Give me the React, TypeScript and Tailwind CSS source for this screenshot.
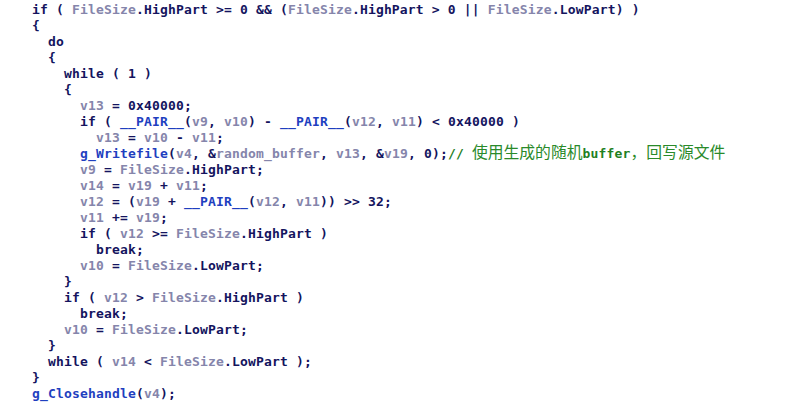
type Tok = [string, string];

// token colours
const N = "text-[#14145e]"; // keywords, punctuation, numbers
const V = "text-[#8585ab]"; // locals / globals
const F = "text-[#1f3fbf]"; // functions
const C = "text-[#1f801f]"; // comment

const lines: [number, Tok[]][] = [
  [0, [[N, "if ( "], [V, "FileSize"], [N, ".HighPart >= 0 && ("], [V, "FileSize"], [N, ".HighPart > 0 || "], [V, "FileSize"], [N, ".LowPart) )"]]],
  [0, [[N, "{"]]],
  [1, [[N, "do"]]],
  [1, [[N, "{"]]],
  [2, [[N, "while ( 1 )"]]],
  [2, [[N, "{"]]],
  [3, [[V, "v13"], [N, " = 0x40000;"]]],
  [3, [[N, "if ( "], [F, "__PAIR__"], [N, "("], [V, "v9"], [N, ", "], [V, "v10"], [N, ") - "], [F, "__PAIR__"], [N, "("], [V, "v12"], [N, ", "], [V, "v11"], [N, ") < 0x40000 )"]]],
  [4, [[V, "v13"], [N, " = "], [V, "v10"], [N, " - "], [V, "v11"], [N, ";"]]],
  [3, [[F, "g_Writefile"], [N, "("], [V, "v4"], [N, ", &"], [V, "random_buffer"], [N, ", "], [V, "v13"], [N, ", &"], [V, "v19"], [N, ", 0);"], [C, "// "], ["cjk", "使用生成的随机"], [C, "buffer"], ["cjk", "，回写源文件"]]],
  [3, [[V, "v9"], [N, " = "], [V, "FileSize"], [N, ".HighPart;"]]],
  [3, [[V, "v14"], [N, " = "], [V, "v19"], [N, " + "], [V, "v11"], [N, ";"]]],
  [3, [[V, "v12"], [N, " = ("], [V, "v19"], [N, " + "], [F, "__PAIR__"], [N, "("], [V, "v12"], [N, ", "], [V, "v11"], [N, ")) >> 32;"]]],
  [3, [[V, "v11"], [N, " += "], [V, "v19"], [N, ";"]]],
  [3, [[N, "if ( "], [V, "v12"], [N, " >= "], [V, "FileSize"], [N, ".HighPart )"]]],
  [4, [[N, "break;"]]],
  [3, [[V, "v10"], [N, " = "], [V, "FileSize"], [N, ".LowPart;"]]],
  [2, [[N, "}"]]],
  [2, [[N, "if ( "], [V, "v12"], [N, " > "], [V, "FileSize"], [N, ".HighPart )"]]],
  [3, [[N, "break;"]]],
  [2, [[V, "v10"], [N, " = "], [V, "FileSize"], [N, ".LowPart;"]]],
  [1, [[N, "}"]]],
  [1, [[N, "while ( "], [V, "v14"], [N, " < "], [V, "FileSize"], [N, ".LowPart );"]]],
  [0, [[N, "}"]]],
  [0, [[F, "g_Closehandle"], [N, "("], [V, "v4"], [N, ");"]]],
];

export default function App() {
  return (
    <div className="w-[812px] h-[406px] overflow-hidden bg-white pl-[32px] pt-[2px] font-['DejaVu_Sans_Mono',monospace] text-[13px] font-bold tracking-[0.17px] leading-[16px]">
      {lines.map(([indent, toks], i) => (
        <div key={i} className="h-[16px] whitespace-pre">
          {"  ".repeat(indent)}
          {toks.map(([cls, text], j) =>
            cls === "cjk" ? (
              <span
                key={j}
                className="font-['Noto_Sans_CJK_SC',sans-serif] text-[15.8px] font-normal tracking-normal text-[#2a8a2a] leading-[10px]"
              >
                {text}
              </span>
            ) : (
              <span key={j} className={cls}>
                {text}
              </span>
            )
          )}
        </div>
      ))}
    </div>
  );
}
